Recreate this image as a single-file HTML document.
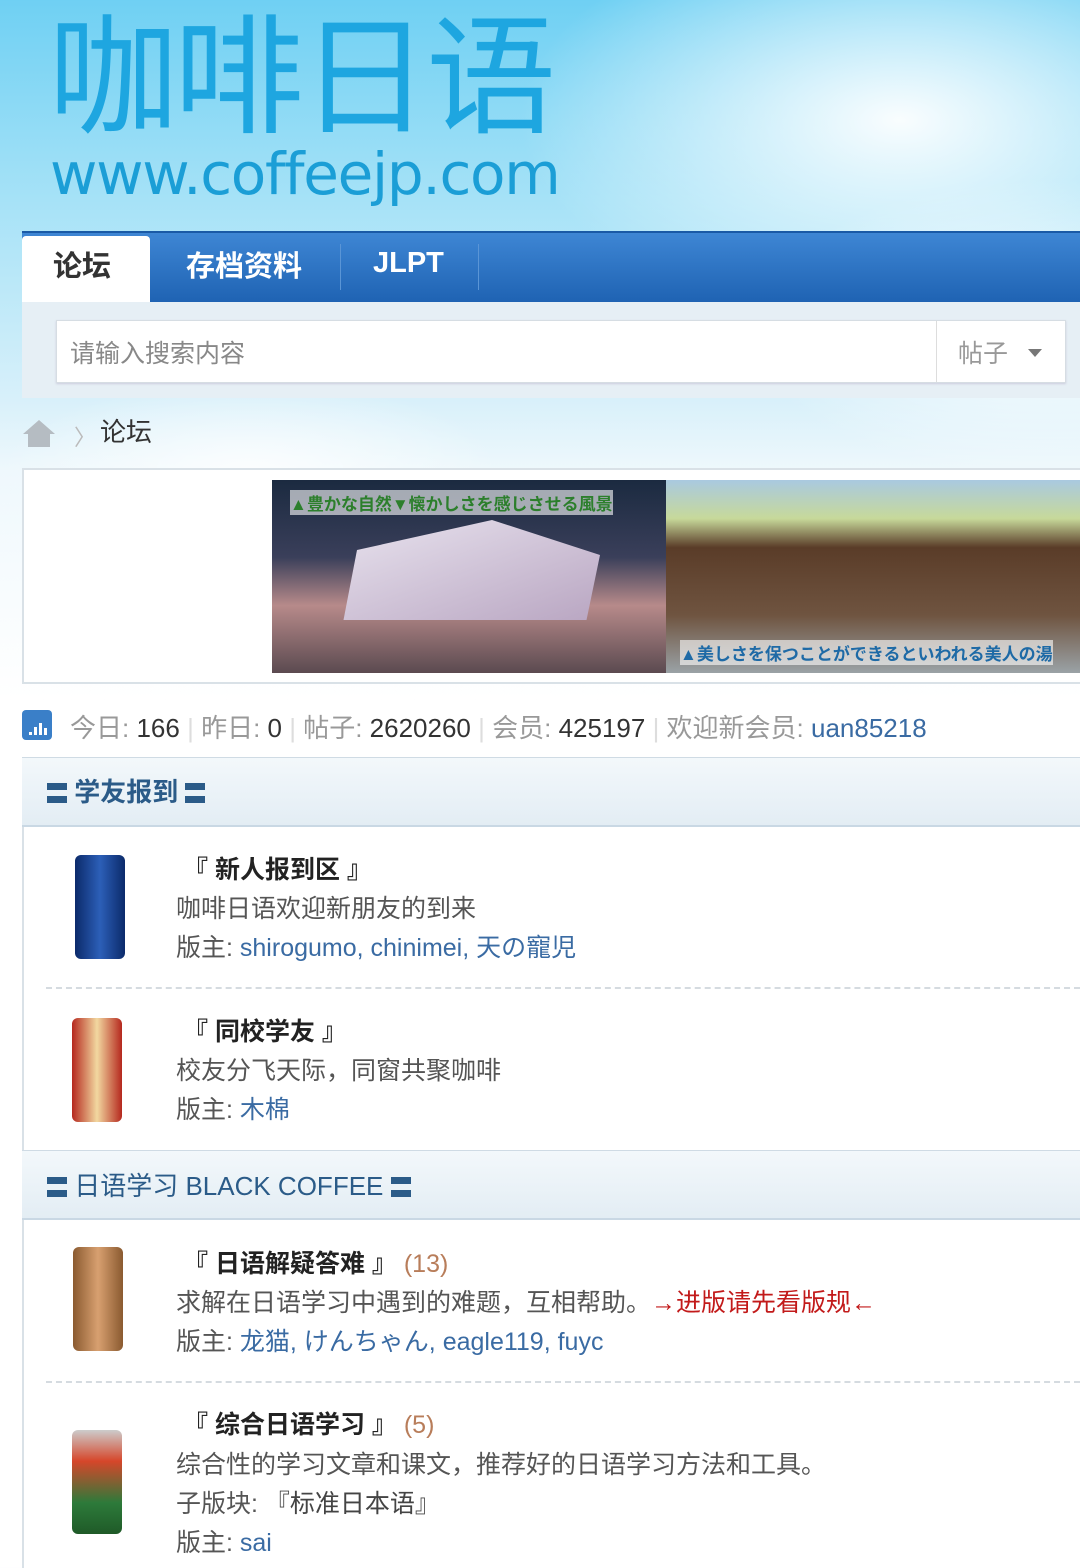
<!DOCTYPE html>
<html><head><meta charset="utf-8"><style>
*{margin:0;padding:0;box-sizing:border-box}
body{width:1080px;height:1568px;overflow:hidden;position:relative;font-family:"Liberation Sans","Noto Sans CJK SC",sans-serif;background:linear-gradient(180deg,#dff2fb 0,#eaf6fc 400px,#fff 700px);}
.a{position:absolute;white-space:nowrap}
.sky{left:0;top:0;width:1080px;height:470px;background:radial-gradient(ellipse 380px 200px at 900px 120px,rgba(255,255,255,.95),rgba(255,255,255,0)),radial-gradient(ellipse 300px 150px at 1050px 330px,rgba(255,255,255,.9),rgba(255,255,255,0)),radial-gradient(ellipse 250px 90px at 250px 470px,rgba(255,255,255,.8),rgba(255,255,255,0)),linear-gradient(180deg,#6fd0f3 0,#a6e2f7 200px,#d8f0fa 400px,#eef8fc 470px)}
.logo{left:48px;top:-8px;font-size:130px;color:#1ea6e0;font-family:"Noto Sans CJK SC",sans-serif;letter-spacing:-4px;line-height:150px}
.url{left:50px;top:140px;font-size:58px;color:#1b9ed6;font-family:"DejaVu Sans",sans-serif;letter-spacing:-1.3px;font-weight:normal}
.nav{left:22px;top:231px;width:1058px;height:71px;background:linear-gradient(180deg,#3e86d4,#1f63b3);border-top:2px solid #1a5aa6}
.tab{left:22px;top:236px;width:128px;height:66px;background:#fff;border-radius:4px 4px 0 0}
.nt{font-size:29px;font-weight:bold;color:#fff;top:243px}
.sep{top:244px;width:1px;height:46px;background:#5a95d6}
.srch{left:22px;top:302px;width:1058px;height:96px;background:#e6eff5}
.inp{left:56px;top:320px;width:1010px;height:63px;background:#fff;border:1px solid #d6dde3;box-shadow:0 1px 2px #ccd}
.cat{left:22px;width:1060px;height:70px;background:linear-gradient(180deg,#f3f8fb,#e3edf4);border-top:1px solid #cfdbe4;border-bottom:2px solid #c9d8e4}
.ct{font-size:26px;font-weight:bold;color:#2b5b88}
.bar{display:inline-block;width:20px;height:20px;border-top:7px solid #2b5b88;border-bottom:7px solid #2b5b88;vertical-align:-2px}
.t{font-size:25px;color:#222;font-weight:bold}
.d{font-size:25px;color:#555}
.l{color:#3a6ba3}
.dash{left:46px;width:1034px;border-top:2px dashed #d5dbe0}
.can{width:50px;height:104px;border-radius:6px}
</style></head><body>
<div class="a sky"></div>
<div class="a logo">咖啡日语</div>
<div class="a url">www.coffeejp.com</div>
<div class="a nav"></div>
<div class="a tab"></div>
<div class="a nt" style="left:53px;color:#333">论坛</div>
<div class="a nt" style="left:186px">存档资料</div>
<div class="a sep" style="left:340px"></div>
<div class="a nt" style="left:373px;top:247px;font-family:'Liberation Sans',sans-serif">JLPT</div>
<div class="a sep" style="left:478px"></div>
<div class="a srch"></div>
<div class="a inp"></div>
<div class="a" style="left:70px;top:334px;font-size:25px;color:#888">请输入搜索内容</div>
<div class="a" style="left:936px;top:321px;width:1px;height:61px;background:#ddd"></div>
<div class="a" style="left:958px;top:334px;font-size:25px;color:#999">帖子</div>
<div class="a" style="left:1028px;top:349px;border:7px solid transparent;border-top:8px solid #777"></div>
<svg class="a" style="left:22px;top:418px" width="34" height="30"><path d="M17 2 L33 16 L28 16 L28 29 L6 29 L6 16 L1 16Z" fill="#b5bcc2"/></svg>
<div class="a" style="left:74px;top:420px;font-size:22px;color:#bbb">〉</div>
<div class="a" style="left:100px;top:412px;font-size:26px;color:#333">论坛</div>
<div class="a" style="left:22px;top:468px;width:1058px;height:216px;background:#fff;border:2px solid #d9e1e7;border-right:none"></div>
<div class="a" style="left:272px;top:480px;width:394px;height:193px;background:linear-gradient(180deg,#1b2a40 0,#3a3f5a 40%,#b78a8a 65%,#5b4a50 100%)"></div>
<div class="a" style="left:330px;top:520px;width:270px;height:100px;background:linear-gradient(160deg,#e9e4ef,#b9a6c2);clip-path:polygon(10% 30%,60% 0,100% 35%,95% 100%,5% 100%)"></div>
<div class="a" style="left:666px;top:480px;width:414px;height:193px;background:linear-gradient(180deg,#a9c9e0 0,#c7d99a 20%,#5a3c28 35%,#6f5440 70%,#9aa2a6 100%)"></div>
<div class="a" style="left:290px;top:490px;font-size:17px;font-weight:bold;color:#2c7f2c;background:rgba(255,255,255,.6)">▲豊かな自然▼懐かしさを感じさせる風景</div>
<div class="a" style="left:680px;top:640px;font-size:17px;font-weight:bold;color:#1e6aa6;background:rgba(255,255,255,.6)">▲美しさを保つことができるといわれる美人の湯</div>
<div class="a" style="left:22px;top:710px;width:30px;height:30px;border-radius:4px;background:#3a7fc8"></div>
<svg class="a" style="left:22px;top:710px" width="30" height="30"><rect x="7" y="22" width="3" height="3" fill="#fff"/><rect x="12" y="17" width="3" height="8" fill="#fff"/><rect x="17" y="13" width="3" height="12" fill="#fff"/><rect x="22" y="18" width="3" height="7" fill="#fff"/></svg>
<div class="a" style="left:70px;top:708px;font-size:26px;color:#999">今日: <span style="color:#333">166</span> <span style="color:#ddd">|</span> 昨日: <span style="color:#333">0</span> <span style="color:#ddd">|</span> 帖子: <span style="color:#333">2620260</span> <span style="color:#ddd">|</span> 会员: <span style="color:#333">425197</span> <span style="color:#ddd">|</span> 欢迎新会员: <span class="l">uan85218</span></div>
<div class="a" style="left:22px;top:757px;width:1060px;height:811px;border-left:2px solid #d9e1e7;background:#fff"></div>
<div class="a cat" style="top:757px"></div>
<div class="a ct" style="left:47px;top:772px"><span class="bar"></span> 学友报到 <span class="bar"></span></div>
<div class="a can" style="left:75px;top:855px;background:linear-gradient(90deg,#0b2a6a,#2c5fb8,#0b2a6a)"></div>
<div class="a t" style="left:183px;top:850px">『 新人报到区 』</div>
<div class="a d" style="left:176px;top:889px">咖啡日语欢迎新朋友的到来</div>
<div class="a d" style="left:176px;top:928px">版主: <span class="l">shirogumo, chinimei, 天の寵児</span></div>
<div class="a dash" style="top:987px"></div>
<div class="a can" style="left:72px;top:1018px;background:linear-gradient(90deg,#b5281e,#f2d8a0,#b5281e)"></div>
<div class="a t" style="left:183px;top:1012px">『 同校学友 』</div>
<div class="a d" style="left:176px;top:1051px">校友分飞天际，同窗共聚咖啡</div>
<div class="a d" style="left:176px;top:1090px">版主: <span class="l">木棉</span></div>
<div class="a cat" style="top:1150px"></div>
<div class="a ct" style="left:47px;top:1166px;font-weight:normal"><span class="bar"></span> 日语学习 BLACK COFFEE <span class="bar"></span></div>
<div class="a can" style="left:73px;top:1247px;background:linear-gradient(90deg,#8a5a30,#d8a070,#8a5a30)"></div>
<div class="a t" style="left:183px;top:1244px">『 日语解疑答难 』 <span style="font-weight:normal;color:#b87d5a">(13)</span></div>
<div class="a d" style="left:176px;top:1283px">求解在日语学习中遇到的难题，互相帮助。<span style="color:#c21a1a">→进版请先看版规←</span></div>
<div class="a d" style="left:176px;top:1322px">版主: <span class="l">龙猫, けんちゃん, eagle119, fuyc</span></div>
<div class="a dash" style="top:1381px"></div>
<div class="a can" style="left:72px;top:1430px;background:linear-gradient(180deg,#ccc,#d6462a 30%,#2d7a3a 70%,#1f5a28)"></div>
<div class="a t" style="left:183px;top:1405px">『 综合日语学习 』 <span style="font-weight:normal;color:#b87d5a">(5)</span></div>
<div class="a d" style="left:176px;top:1445px">综合性的学习文章和课文，推荐好的日语学习方法和工具。</div>
<div class="a d" style="left:176px;top:1484px">子版块: <span class="l" style="color:#444">『标准日本语』</span></div>
<div class="a d" style="left:176px;top:1523px">版主: <span class="l">sai</span></div>
</body></html>
